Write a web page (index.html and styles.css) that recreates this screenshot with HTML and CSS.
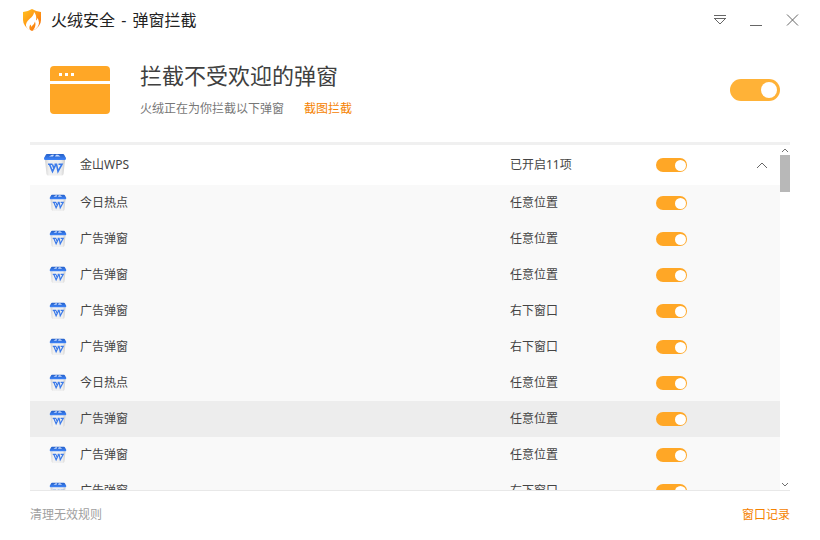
FILE: index.html
```html
<!DOCTYPE html>
<html lang="zh-CN">
<head>
<meta charset="utf-8">
<meta name="viewport" content="width=device-width, initial-scale=1">
<title>火绒安全 - 弹窗拦截</title>
<link rel="stylesheet" href="styles.css">
</head>
<body>
<svg class="defs" aria-hidden="true">
  <defs>
    <linearGradient id="cup-body" x1="0" x2="1" y1="0" y2="0">
      <stop offset="0" stop-color="#d2d2d2"/><stop offset=".2" stop-color="#f1f1f1"/>
      <stop offset=".8" stop-color="#eeeeee"/><stop offset="1" stop-color="#cacaca"/>
    </linearGradient>
    <linearGradient id="cup-lid" x1="0" x2="0" y1="0" y2="1">
      <stop offset="0" stop-color="#2560c8"/><stop offset="1" stop-color="#3f85fa"/>
    </linearGradient>
    <symbol id="wps" viewBox="0 0 24 24">
      <path d="M2 7H22L20.500 21Q20.300 22.500 18.500 22.500H5.500Q3.700 22.500 3.500 21Z" fill="url(#cup-body)"/>
      <path d="M4 1H20Q21 1 21.300 2L23 5Q23.200 7 22 7H2Q.8 7 1 5L2.700 2Q3 1 4 1Z" fill="url(#cup-lid)"/>
      <path d="M6 3.500L9 1.800H11L10 3.500ZM12 3.500L13 1.800H15L17.500 3.500Z" fill="#c9dcff"/>
      <path d="M5 11.200H9.500M6.500 11.200L9.500 18.500L13 11.200M11.500 11.200H13.500L15 18.500L19 11.200H15.500M9.500 11.500L10.800 15" fill="none" stroke="#3c7bea" stroke-width="1.600"/>
    </symbol>
  </defs>
</svg>
<div class="window">
  <header class="titlebar">
    <svg class="logo" viewBox="0 0 20 22" aria-hidden="true">
      <defs><linearGradient id="shield" x1="0" x2="1" y1="0" y2="1">
        <stop offset="0" stop-color="#ffc31f"/><stop offset=".5" stop-color="#ff9716"/><stop offset="1" stop-color="#f56a08"/>
      </linearGradient></defs>
      <path d="M10 0Q14 2.500 19 3V11Q19 18 10 22Q1 18 1 11V3Q6 2.500 10 0Z" fill="url(#shield)"/>
      <path d="M12 3Q12 6.500 7.500 10Q3.500 13.500 4 17Q5 20 8 21.200Q6.500 18 8.500 15.500Q9.500 16.500 9 18Q12.500 15.500 13 12.500Q14.500 17 11 21.500Q17 18.500 17 13.500Q16.800 11 15.500 9Q15 11 14 11.500Q15 6 12 3Z" fill="#fff"/>
    </svg>
    <h1 class="app-title">火绒安全<span class="dash"> - </span>弹窗拦截</h1>
    <div class="controls">
      <button class="control" type="button" aria-label="菜单"><svg viewBox="0 0 12 12"><path d="M0 1.500H12M0 4.500H12M1 5L6 10L11 5"/></svg></button>
      <button class="control" type="button" aria-label="最小化"><svg viewBox="0 0 12 12"><path d="M0 11.500H12"/></svg></button>
      <button class="control" type="button" aria-label="关闭"><svg viewBox="0 0 12 12"><path d="M1 .5L12 11.500M12 .5L1 11.500"/></svg></button>
    </div>
  </header>

  <section class="intro">
    <svg class="intro-icon" viewBox="0 0 60 48" aria-hidden="true">
      <path d="M0 15V4Q0 0 4 0H56Q60 0 60 4V15ZM0 18H60V44Q60 48 56 48H4Q0 48 0 44Z" fill="#ffa726"/>
      <path d="M9 7H12V10H9ZM15 7H18V10H15ZM21 7H24V10H21Z" fill="#fff"/>
    </svg>
    <div class="intro-text">
      <h2 class="headline">拦截不受欢迎的弹窗</h2>
      <p class="summary">火绒正在为你拦截以下弹窗<a class="accent" href="#capture">截图拦截</a></p>
    </div>
    <input class="switch switch-large" type="checkbox" aria-label="弹窗拦截" checked>
  </section>

  <main class="panel">
    <div class="rules">
      <table class="table">
        <colgroup><col><col class="col-status"><col class="col-switch"><col class="col-fold"></colgroup>
        <tbody>
          <tr class="group">
            <td><label class="name" for="r0"><svg class="app-icon"><use href="#wps"/></svg>金山WPS</label></td>
            <td>已开启11项</td>
            <td><input class="switch" id="r0" type="checkbox" checked></td>
            <td><button class="fold" type="button" aria-label="收起"><svg viewBox="0 0 12 8"><path d="M1 7L6 2L11 7"/></svg></button></td>
          </tr>
          <tr><td><label class="name" for="r1"><svg class="app-icon"><use href="#wps"/></svg>今日热点</label></td><td>任意位置</td><td><input class="switch" id="r1" type="checkbox" checked></td><td></td></tr>
          <tr><td><label class="name" for="r2"><svg class="app-icon"><use href="#wps"/></svg>广告弹窗</label></td><td>任意位置</td><td><input class="switch" id="r2" type="checkbox" checked></td><td></td></tr>
          <tr><td><label class="name" for="r3"><svg class="app-icon"><use href="#wps"/></svg>广告弹窗</label></td><td>任意位置</td><td><input class="switch" id="r3" type="checkbox" checked></td><td></td></tr>
          <tr><td><label class="name" for="r4"><svg class="app-icon"><use href="#wps"/></svg>广告弹窗</label></td><td>右下窗口</td><td><input class="switch" id="r4" type="checkbox" checked></td><td></td></tr>
          <tr><td><label class="name" for="r5"><svg class="app-icon"><use href="#wps"/></svg>广告弹窗</label></td><td>右下窗口</td><td><input class="switch" id="r5" type="checkbox" checked></td><td></td></tr>
          <tr><td><label class="name" for="r6"><svg class="app-icon"><use href="#wps"/></svg>今日热点</label></td><td>任意位置</td><td><input class="switch" id="r6" type="checkbox" checked></td><td></td></tr>
          <tr class="active"><td><label class="name" for="r7"><svg class="app-icon"><use href="#wps"/></svg>广告弹窗</label></td><td>任意位置</td><td><input class="switch" id="r7" type="checkbox" checked></td><td></td></tr>
          <tr><td><label class="name" for="r8"><svg class="app-icon"><use href="#wps"/></svg>广告弹窗</label></td><td>任意位置</td><td><input class="switch" id="r8" type="checkbox" checked></td><td></td></tr>
          <tr><td><label class="name" for="r9"><svg class="app-icon"><use href="#wps"/></svg>广告弹窗</label></td><td>右下窗口</td><td><input class="switch" id="r9" type="checkbox" checked></td><td></td></tr>
        </tbody>
      </table>
    </div>
    <div class="scrollbar" aria-hidden="true">
      <svg class="arrow" viewBox="0 0 10 10"><path d="M2 7L5 4L8 7"/></svg>
      <div class="thumb"></div>
      <svg class="arrow arrow-down" viewBox="0 0 10 10"><path d="M2 3L5 6L8 3"/></svg>
    </div>
  </main>

  <footer class="footer">
    <a class="muted" href="#clean">清理无效规则</a>
    <a class="accent" href="#log">窗口记录</a>
  </footer>
</div>
</body>
</html>
```

FILE: styles.css
```css
* {
  box-sizing: border-box;
}

body {
  margin: 0;
  background: #fff;
  color: #444;
  font: 12px/16px "Noto Sans", "Noto Sans CJK SC", sans-serif;
}

.defs {
  position: absolute;
  width: 0;
  height: 0;
}

.window {
  display: flex;
  flex-direction: column;
  height: 100vh;
}

h1, h2, p {
  margin: 0;
  font-weight: 400;
}

a {
  text-decoration: none;
}

button {
  padding: 0;
  border: 0;
  background: none;
}

.titlebar {
  display: flex;
  align-items: center;
  height: 40px;
  padding: 0 22px;
}

.logo {
  width: 20px;
  height: 22px;
  margin-right: 9px;
}

.app-title {
  color: #222;
  font-size: 16px;
  line-height: 24px;
}

.dash {
  margin: 0 2px;
}

.controls {
  display: flex;
  gap: 24px;
  margin-left: auto;
}

.control {
  width: 12px;
  height: 12px;
}

.control svg,
.fold svg {
  display: block;
  width: 100%;
  height: 100%;
  overflow: visible;
  fill: none;
  stroke: #666;
}

.intro {
  display: flex;
  align-items: center;
  gap: 30px;
  height: 102px;
  padding: 0 40px 2px 50px;
}

.intro-icon {
  width: 60px;
  height: 48px;
}

.intro-text {
  flex: 1;
  padding-bottom: 4px;
}

.headline {
  margin-bottom: 10px;
  color: #404040;
  font-size: 22px;
  line-height: 32px;
}

.summary {
  color: #777;
}

.summary .accent {
  margin-left: 20px;
}

.accent {
  color: #f58200;
}

.muted {
  color: #a0a0a0;
}

.switch {
  display: flex;
  align-items: center;
  justify-content: flex-end;
  appearance: none;
  width: 31px;
  height: 14px;
  margin: 0;
  padding: 0 1px;
  border-radius: 7px;
  background: #ffa726;
}

.switch::before {
  content: "";
  width: 11px;
  height: 11px;
  border-radius: 50%;
  background: #fff;
}

.switch-large {
  width: 50px;
  height: 22px;
  padding: 0 3px;
  border-radius: 11px;
  background: #ffb237;
}

.switch-large::before {
  width: 16px;
  height: 16px;
}

.panel {
  display: flex;
  flex: 1;
  min-height: 0;
  margin: 0 30px;
  border-top: 3px solid #f0f0f0;
  border-bottom: 1px solid #e8e8e8;
}

.rules {
  flex: 1;
  overflow: hidden;
}

.table {
  width: 100%;
  table-layout: fixed;
  border-collapse: collapse;
}

.col-status {
  width: 146px;
}

.col-switch {
  width: 100px;
}

.col-fold {
  width: 24px;
}

.table tr {
  height: 36px;
  background: #f9f9f9;
}

.table .group {
  height: 40px;
  background: #fff;
}

.table .active {
  background: #ededed;
}

.table td {
  padding: 0;
}

.name {
  display: flex;
  align-items: center;
  gap: 13px;
  padding-left: 19px;
}

.app-icon {
  width: 18px;
  height: 18px;
}

.group .name {
  padding-left: 13px;
}

.group .app-icon {
  width: 24px;
  height: 24px;
}

.fold {
  display: block;
  width: 12px;
  height: 8px;
}

.scrollbar {
  display: flex;
  flex-direction: column;
  width: 10px;
}

.arrow {
  width: 10px;
  height: 10px;
  fill: none;
  stroke: #707070;
}

.arrow-down {
  margin-top: auto;
}

.thumb {
  height: 37px;
  background: #b8b8b8;
}

.footer {
  display: flex;
  align-items: center;
  justify-content: space-between;
  height: 49px;
  padding: 0 30px 2px;
}
```
